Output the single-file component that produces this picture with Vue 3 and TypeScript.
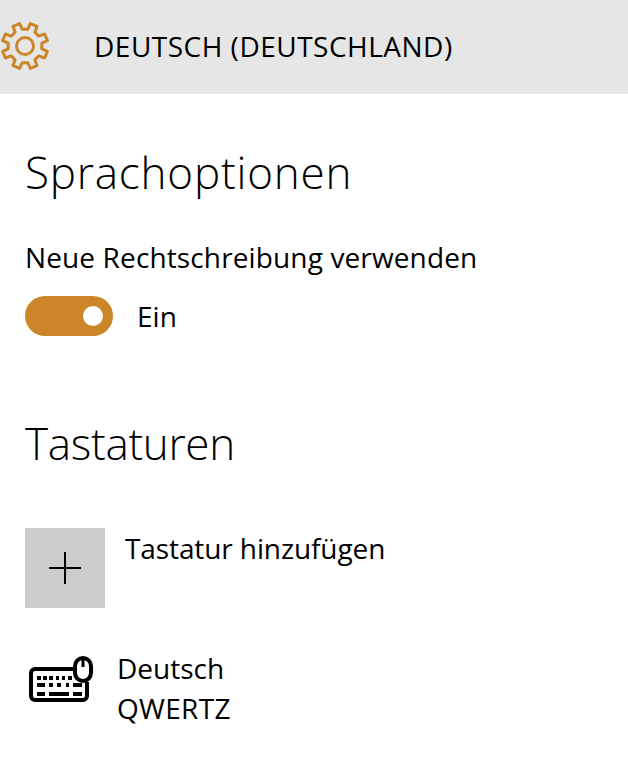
<script setup lang="ts">
// gear outline: 8 teeth, rotated so that no tooth points straight up
const gearPath = (() => {
  const cx = 25
  const cy = 46
  const points: string[] = []
  for (let i = 0; i < 8; i++) {
    const a = ((i * 45 + 22.5 - 90) * Math.PI) / 180
    const offsets: [number, number][] = [
      [-13, 17],
      [-9, 23],
      [9, 23],
      [13, 17]
    ]
    for (const [deg, r] of offsets) {
      const t = a + (deg * Math.PI) / 180
      points.push(`${(cx + r * Math.cos(t)).toFixed(1)} ${(cy + r * Math.sin(t)).toFixed(1)}`)
    }
  }
  return `M${points.join('L')}Z`
})()
</script>

<template>
  <div class="page">
    <header class="header">
      <svg class="gear" width="50" height="94" viewBox="0 0 50 94">
        <path :d="gearPath" fill="none" stroke="#cc862a" stroke-width="3" stroke-linejoin="round" />
        <circle cx="25" cy="46" r="8.5" fill="none" stroke="#cc862a" stroke-width="3" />
      </svg>
      <span class="header-title">DEUTSCH (DEUTSCHLAND)</span>
    </header>

    <main class="content">
      <h2 class="section-title first">Sprachoptionen</h2>
      <div class="option-label">Neue Rechtschreibung verwenden</div>
      <div class="toggle-row">
        <span class="toggle"><span class="knob" /></span>
        <span class="toggle-text">Ein</span>
      </div>

      <h2 class="section-title second">Tastaturen</h2>

      <div class="add-row">
        <span class="add-tile">
          <svg width="32" height="32" viewBox="0 0 32 32">
            <path d="M16 0V32M0 16H32" stroke="#000" stroke-width="2" fill="none" />
          </svg>
        </span>
        <span class="add-text">Tastatur hinzufügen</span>
      </div>

      <div class="kb-row">
        <svg class="kb-icon" width="68" height="52" viewBox="0 0 68 52">
          <path
            d="M48 15H8a4 4 0 0 0-4 4V42a4 4 0 0 0 4 4H56a4 4 0 0 0 4-4V28"
            fill="none"
            stroke="#000"
            stroke-width="4"
          />
          <rect x="48" y="4" width="16" height="23" rx="8" fill="#fff" stroke="#000" stroke-width="4" />
          <path d="M56 4V13" stroke="#000" stroke-width="3" />
          <path
            d="M10 22h4v4h-4zM16 22h4v4h-4zM22 22h4v4h-4zM29 22h3v4h-3zM35 22h3v4h-3zM41 22h4v4h-4zM10 29h8v4h-8zM22 29h4v4h-4zM30 29h4v4h-4zM39 29h3v4h-3zM46 29h9v4h-9zM10 38h8v4h-8zM22 38h20v4H22zM46 38h9v4h-9z"
            fill="#000"
          />
        </svg>
        <div class="kb-text">
          <div>Deutsch</div>
          <div class="kb-layout">QWERTZ</div>
        </div>
      </div>
    </main>
  </div>
</template>

<style scoped>
.page {
  width: 628px;
  height: 771px;
  background: #fff;
  color: #000;
  font-family: "Open Sans", "Noto Sans", sans-serif;
  overflow: hidden;
}

.header {
  height: 94px;
  background: #e6e6e6;
  display: flex;
  align-items: center;
}

.gear {
  flex: none;
}

.header-title {
  margin-left: 44px;
  margin-top: -2px;
  font-size: 28px;
  letter-spacing: 0.5px;
  white-space: nowrap;
}

.content {
  padding-left: 25px;
}

.section-title {
  margin: 0;
  font-weight: 300;
  font-size: 44px;
  line-height: 56px;
}

.section-title.first {
  margin-top: 50px;
  letter-spacing: 0.8px;
}

.section-title.second {
  margin-top: 79px;
  letter-spacing: -0.3px;
}

.option-label {
  margin-top: 37px;
  font-size: 28px;
  letter-spacing: 0.13px;
  line-height: 40px;
}

.toggle-row {
  margin-top: 19px;
  display: flex;
  align-items: center;
  height: 40px;
}

.toggle {
  width: 88px;
  height: 40px;
  border-radius: 20px;
  background: #cc862a;
  position: relative;
}

.knob {
  position: absolute;
  top: 10px;
  right: 10px;
  width: 20px;
  height: 20px;
  border-radius: 50%;
  background: #fff;
}

.toggle-text {
  margin-left: 24px;
  font-size: 28px;
}

.add-row {
  margin-top: 57px;
  display: flex;
  align-items: flex-start;
}

.add-tile {
  width: 80px;
  height: 80px;
  background: #cccccc;
  display: flex;
  align-items: center;
  justify-content: center;
}

.add-text {
  margin-left: 20px;
  font-size: 28px;
  letter-spacing: -0.1px;
  line-height: 40px;
}

.kb-row {
  margin-top: 40px;
  display: flex;
  align-items: flex-start;
}

.kb-icon {
  flex: none;
  margin-left: 2px;
  margin-top: 6px;
}

.kb-text {
  margin-left: 22px;
  font-size: 28px;
  line-height: 40px;
}

.kb-layout {
  letter-spacing: 0.3px;
}
</style>
